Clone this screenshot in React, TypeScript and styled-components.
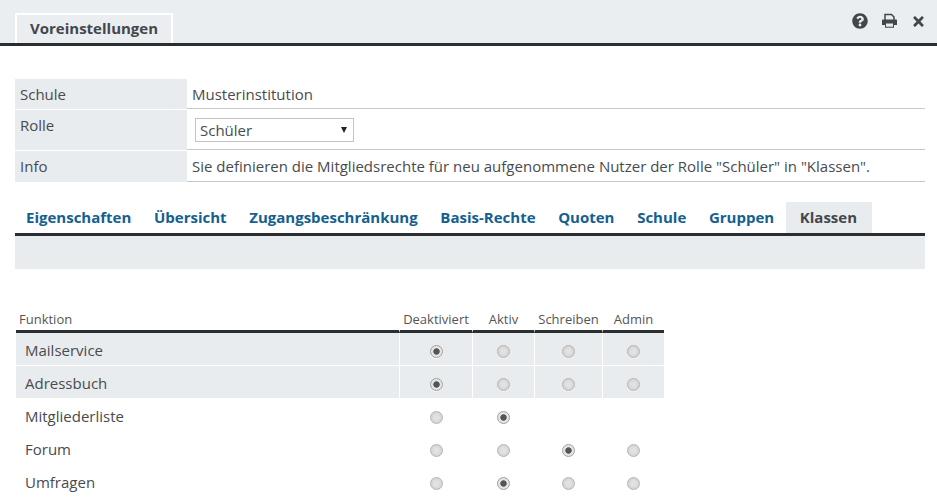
import React from 'react';
import styled, { createGlobalStyle } from 'styled-components';
import { FaQuestionCircle, FaTimes } from 'react-icons/fa';

const GlobalStyle = createGlobalStyle`
  html, body {
    margin: 0;
    padding: 0;
    background: #fff;
    height: 499px;
    overflow: hidden;
  }
  body {
    font-family: "Open Sans", "Liberation Sans", sans-serif;
    font-size: 15px;
    color: #484b4e;
  }
`;

const Header = styled.div`
  height: 43px;
  background: #ebeef0;
  border-bottom: 3px solid #2b2e31;
  display: flex;
  align-items: flex-end;
  justify-content: space-between;
  padding: 0 11px 0 15px;
`;

const HeaderTab = styled.div`
  box-sizing: border-box;
  width: 158px;
  height: 30px;
  border: 2px solid #fff;
  border-bottom: none;
  border-radius: 2px 2px 0 0;
  padding-left: 13px;
  line-height: 26px;
  font-weight: 700;
  font-size: 15px;
  color: #43474b;
`;

const HeaderIcons = styled.div`
  display: flex;
  align-items: center;
  gap: 13px;
  height: 16px;
  margin-bottom: 14px;
  color: #43474b;
`;

const Content = styled.div`
  padding: 33px 12px 0 15px;
`;

const InfoRows = styled.div`
  display: flex;
  flex-direction: column;
  gap: 1px;
`;

const InfoRow = styled.div<{ $h: number }>`
  display: grid;
  grid-template-columns: 172px 1fr;
  height: ${p => p.$h}px;
`;

const InfoLabel = styled.div`
  background: #e9ecef;
  padding: 5px 0 0 5px;
  line-height: 20px;
`;

const InfoValue = styled.div`
  border-bottom: 1px solid #c8c8c8;
  padding: 5px 0 0 5px;
  line-height: 20px;
`;

const SelectCell = styled(InfoValue)`
  padding: 8px 0 0 8px;
`;

const SelectBox = styled.div`
  box-sizing: border-box;
  width: 159px;
  height: 24px;
  border: 1px solid #c4c4c4;
  padding-left: 4px;
  line-height: 22px;
  position: relative;

  &::after {
    content: '';
    position: absolute;
    right: 6px;
    top: 8px;
    border-left: 3.5px solid transparent;
    border-right: 3.5px solid transparent;
    border-top: 6px solid #222;
  }
`;

const TabBar = styled.div`
  display: flex;
  margin-top: 20px;
  height: 31px;
  border-bottom: 3px solid #2b2e31;
`;

const TabItem = styled.div<{ $active?: boolean }>`
  padding: 0 ${p => (p.$active ? 15 : 11)}px 0 ${p => (p.$active ? 14 : 11)}px;
  margin-right: ${p => (p.$active ? 0 : 0.65)}px;
  line-height: 31px;
  font-weight: 700;
  font-size: 15px;
  background: ${p => (p.$active ? '#e9ecef' : 'transparent')};
  color: ${p => (p.$active ? '#43474b' : '#14608f')};
`;

const SubBar = styled.div`
  height: 33px;
  background: #e9ecef;
`;

const RightsTable = styled.table`
  border-collapse: separate;
  border-spacing: 0;
  table-layout: fixed;
  width: 648px;
  margin: 41px 0 0 1px;
`;

const HeadCell = styled.th<{ $w: number; $left?: boolean }>`
  box-sizing: border-box;
  width: ${p => p.$w}px;
  height: 23px;
  padding: 0 0 0 ${p => (p.$left ? 3 : 0)}px;
  vertical-align: top;
  font-weight: 400;
  font-size: 13px;
  line-height: 18px;
  color: #555;
  text-align: ${p => (p.$left ? 'left' : 'center')};
  border-bottom: 3px solid #2b2e31;
  border-left: ${p => (p.$left ? 'none' : '1px solid #fff')};
`;

const NameCell = styled.td<{ $shaded: boolean }>`
  height: 33px;
  box-sizing: border-box;
  padding: 2px 0 0 9px;
  background: ${p => (p.$shaded ? '#e9ecef' : 'transparent')};
  border-bottom: 1px solid #fff;
`;

const RadioCell = styled.td<{ $shaded: boolean }>`
  padding: 0;
  text-align: center;
  background: ${p => (p.$shaded ? '#e9ecef' : 'transparent')};
  border-left: 1px solid #fff;
  border-bottom: 1px solid #fff;
`;

const Radio = styled.input`
  appearance: none;
  display: block;
  box-sizing: border-box;
  width: 13px;
  height: 13px;
  margin: 4px auto 0;
  border-radius: 50%;
  border: 1px solid #b4b4b4;
  background: radial-gradient(circle, #e2e2e2 0 2px, #d6d6d6 5px);
  box-shadow: 0 1px 0 rgba(255, 255, 255, 0.5);

  &:checked {
    background: radial-gradient(circle, #555 0 2.8px, #e4e4e4 3.6px);
    border-color: #a0a0a0;
  }
`;

const PrintIcon = () => (
  <svg width="17" height="16" viewBox="0 0 17 16" fill="none">
    <path d="M4 7V1.5h6.5L13 4v3" stroke="#43474b" strokeWidth="1.5" />
    <path d="M1 7.5C1 6.9 1.4 6.500 2 6.500h13c.6 0 1 .4 1 1V12h-3v2.800H4V12H1V7.500z" fill="#43474b" />
    <rect x="5" y="10.500" width="7" height="3.200" fill="#ebeef0" />
  </svg>
);

const tabs = ['Eigenschaften', 'Übersicht', 'Zugangsbeschränkung', 'Basis-Rechte', 'Quoten', 'Schule', 'Gruppen'];

const columns = [
  { label: 'Deaktiviert', width: 73 },
  { label: 'Aktiv', width: 62 },
  { label: 'Schreiben', width: 68 },
  { label: 'Admin', width: 62 },
];

// null where the option does not exist
const rows: { name: string; options: (boolean | null)[] }[] = [
  { name: 'Mailservice', options: [true, false, false, false] },
  { name: 'Adressbuch', options: [true, false, false, false] },
  { name: 'Mitgliederliste', options: [false, true, null, null] },
  { name: 'Forum', options: [false, false, true, false] },
  { name: 'Umfragen', options: [false, true, false, false] },
];

export default function App() {
  return (
    <>
      <GlobalStyle />
      <Header>
        <HeaderTab>Voreinstellungen</HeaderTab>
        <HeaderIcons>
          <FaQuestionCircle size={16} />
          <PrintIcon />
          <FaTimes size={15} />
        </HeaderIcons>
      </Header>
      <Content>
        <InfoRows>
          <InfoRow $h={30}>
            <InfoLabel>Schule</InfoLabel>
            <InfoValue>Musterinstitution</InfoValue>
          </InfoRow>
          <InfoRow $h={40}>
            <InfoLabel>Rolle</InfoLabel>
            <SelectCell>
              <SelectBox>Schüler</SelectBox>
            </SelectCell>
          </InfoRow>
          <InfoRow $h={31}>
            <InfoLabel>Info</InfoLabel>
            <InfoValue>
              Sie definieren die Mitgliedsrechte für neu aufgenommene Nutzer der Rolle "Schüler" in "Klassen".
            </InfoValue>
          </InfoRow>
        </InfoRows>
        <TabBar>
          {tabs.map(tab => (
            <TabItem key={tab}>{tab}</TabItem>
          ))}
          <TabItem $active>Klassen</TabItem>
        </TabBar>
        <SubBar />
        <RightsTable>
          <thead>
            <tr>
              <HeadCell $w={383} $left>
                Funktion
              </HeadCell>
              {columns.map(col => (
                <HeadCell key={col.label} $w={col.width}>
                  {col.label}
                </HeadCell>
              ))}
            </tr>
          </thead>
          <tbody>
            {rows.map((row, r) => (
              <tr key={row.name}>
                <NameCell $shaded={r < 2}>{row.name}</NameCell>
                {row.options.map((checked, c) => (
                  <RadioCell key={c} $shaded={r < 2}>
                    {checked !== null && <Radio type="radio" name={row.name} defaultChecked={checked} />}
                  </RadioCell>
                ))}
              </tr>
            ))}
          </tbody>
        </RightsTable>
      </Content>
    </>
  );
}
